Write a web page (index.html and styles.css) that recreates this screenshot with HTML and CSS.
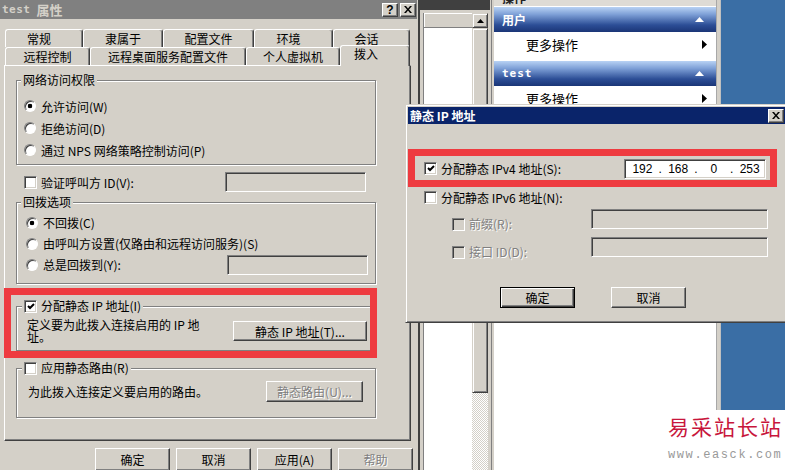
FILE: index.html
```html
<!DOCTYPE html>
<html>
<head>
  <meta charset="UTF-8">
  <title>test 属性</title>
  <link rel="stylesheet" href="styles.css">
</head>
<body>
<div class="screen">

  <!-- 后面的管理控制台窗口 -->
  <div class="mmc">
    <div class="list-pane">
      <div class="list-band"></div>
      <div class="list-box">
        <div class="list-col">
          <div class="list-head"></div>
          <div class="list-white"></div>
        </div>
        <div class="vscroll">
          <div class="sb-btn"><svg width="7" height="4" viewBox="0 0 7 4"><path d="M3.5 0L7 4H0z" fill="#000"/></svg></div>
          <div class="sb-thumb"></div>
          <div class="sb-track"></div>
        </div>
      </div>
    </div>
    <div class="action-pane">
      <div class="act-title"><span>操作</span></div>
      <div class="act-bar"><span>用户</span><svg width="9" height="5" viewBox="0 0 9 5"><path d="M4.5 0L9 5H0z" fill="#fff"/></svg></div>
      <div class="act-item"><span>更多操作</span><svg width="5" height="9" viewBox="0 0 5 9"><path d="M0 0L5 4.5L0 9z" fill="#000"/></svg></div>
      <div class="act-bar"><span class="act-mono">test</span><svg width="9" height="5" viewBox="0 0 9 5"><path d="M4.5 0L9 5H0z" fill="#fff"/></svg></div>
      <div class="act-item"><span>更多操作</span><svg width="5" height="9" viewBox="0 0 5 9"><path d="M0 0L5 4.5L0 9z" fill="#000"/></svg></div>
    </div>
    <div class="mmc-edge"></div>
  </div>

  <!-- test 属性 对话框 -->
  <div class="props">
    <div class="titlebar inactive">
      <span class="title-latin">test</span><span class="title-cjk">属性</span>
      <div class="cap-btns">
        <span class="cap-btn help">?</span>
        <span class="cap-btn"><svg width="8" height="7" viewBox="0 0 8 7"><path d="M0 0h2l2 2.5L6 0h2L5 3.5 8 7H6L4 4.5 2 7H0l3-3.5z" fill="#000"/></svg></span>
      </div>
    </div>

    <div class="tabs">
      <div class="tab-row r1">
        <div class="tab shift">常规</div>
        <div class="tab">隶属于</div>
        <div class="tab">配置文件</div>
        <div class="tab shift">环境</div>
        <div class="tab shift">会话</div>
      </div>
      <div class="tab-row r2">
        <div class="tab">远程控制</div>
        <div class="tab">远程桌面服务配置文件</div>
        <div class="tab">个人虚拟机</div>
        <div class="tab active">拨入</div>
      </div>
    </div>

    <div class="panel">
      <div class="group g1">
        <div class="gtitle">网络访问权限</div>
        <div class="opts">
          <div class="opt"><span class="radio on"></span>允许访问(W)</div>
          <div class="opt"><span class="radio"></span>拒绝访问(D)</div>
          <div class="opt"><span class="radio"></span>通过 NPS 网络策略控制访问(P)</div>
        </div>
      </div>

      <div class="chkrow">
        <span class="chk"></span>验证呼叫方 ID(V):
        <span class="field off cid"></span>
      </div>

      <div class="group g2">
        <div class="gtitle">回拨选项</div>
        <div class="opts">
          <div class="opt"><span class="radio on"></span>不回拨(C)</div>
          <div class="opt"><span class="radio"></span>由呼叫方设置(仅路由和远程访问服务)(S)</div>
          <div class="opt"><span class="radio"></span>总是回拨到(Y):<span class="field off cb"></span></div>
        </div>
      </div>

      <div class="group g3">
        <div class="gtitle ctitle"><span class="chk"><svg width="8" height="7" viewBox="0 0 8 7"><path d="M1 3l2 2 4-4" fill="none" stroke="#000" stroke-width="2"/></svg></span>分配静态 IP 地址(I)</div>
        <div class="gbody">
          <div class="gtext">定义要为此拨入连接启用的 IP 地址。</div>
          <span class="btn ipbtn">静态 IP 地址(T)...</span>
        </div>
      </div>

      <div class="group g4">
        <div class="gtitle ctitle"><span class="chk"></span>应用静态路由(R)</div>
        <div class="gbody">
          <div>为此拨入连接定义要启用的路由。</div>
          <span class="btn dis routebtn">静态路由(U)...</span>
        </div>
      </div>
    </div>

    <div class="dlg-btns">
      <span class="btn">确定</span>
      <span class="btn">取消</span>
      <span class="btn">应用(A)</span>
      <span class="btn dis">帮助</span>
    </div>
  </div>

  <!-- 静态 IP 地址 对话框 -->
  <div class="ipdlg">
    <div class="titlebar active">
      <span>静态 IP 地址</span>
      <div class="cap-btns">
        <span class="cap-btn"><svg width="8" height="7" viewBox="0 0 8 7"><path d="M0 0h2l2 2.5L6 0h2L5 3.5 8 7H6L4 4.5 2 7H0l3-3.5z" fill="#000"/></svg></span>
      </div>
    </div>
    <div class="ip-body">
      <div class="iprow v4">
        <div class="iplabel"><span class="chk"><svg width="8" height="7" viewBox="0 0 8 7"><path d="M1 3l2 2 4-4" fill="none" stroke="#000" stroke-width="2"/></svg></span>分配静态 IPv4 地址(S):</div>
        <div class="field ipfield">
          <span class="seg">192</span><span class="dot">.</span>
          <span class="seg">168</span><span class="dot">.</span>
          <span class="seg">0</span><span class="dot">.</span>
          <span class="seg">253</span>
        </div>
      </div>
      <div class="iprow v6">
        <div class="iplabel"><span class="chk"></span>分配静态 IPv6 地址(N):</div>
      </div>
      <div class="iprow sub first">
        <div class="iplabel dis"><span class="chk off"></span>前缀(R):</div>
        <span class="field off subfield"></span>
      </div>
      <div class="iprow sub">
        <div class="iplabel dis"><span class="chk off"></span>接口 ID(D):</div>
        <span class="field off subfield"></span>
      </div>
      <div class="ip-btns">
        <span class="btn def">确定</span>
        <span class="btn">取消</span>
      </div>
    </div>
  </div>

  <!-- 红色标注 -->
  <div class="mark mark-props"></div>
  <div class="mark mark-ip"></div>

  <div class="watermark">
    <div class="wm-cn">易采站长站</div>
    <div class="wm-url">www.easck.com</div>
  </div>
</div>
</body>
</html>
```

FILE: styles.css
```css
* {
  box-sizing: border-box;
}
body {
  margin: 0;
  width: 785px;
  height: 470px;
  overflow: hidden;
  font-family: "Noto Sans CJK SC", "Liberation Sans", sans-serif;
  font-size: 12px;
  color: #000;
  background: #3a6ea5;
}
.screen {
  position: relative;
  width: 785px;
  height: 470px;
  overflow: hidden;
}

/* 经典控件 */
.chk {
  width: 13px;
  height: 13px;
  flex: none;
  border: 1px solid;
  border-color: #808080 #fff #fff #808080;
  box-shadow: inset 1px 1px #404040, inset -1px -1px #d4d0c8;
  background: #fff;
  display: flex;
  align-items: center;
  justify-content: center;
}
.chk.off {
  background: #d4d0c8;
}
.radio {
  width: 12px;
  height: 12px;
  flex: none;
  border-radius: 50%;
  border: 1px solid;
  border-color: #808080 #fff #fff #808080;
  box-shadow: inset 1px 1px #404040;
  background: #fff;
}
.radio.on {
  background: radial-gradient(circle, #000 0 2px, #fff 2.6px);
}
.field {
  display: block;
  height: 20px;
  border: 1px solid;
  border-color: #808080 #fff #fff #808080;
  box-shadow: inset 1px 1px #404040, inset -1px -1px #d4d0c8;
  background: #fff;
}
.field.off {
  background: #d4d0c8;
}
.btn {
  width: 75px;
  height: 23px;
  flex: none;
  display: flex;
  align-items: center;
  justify-content: center;
  background: #d4d0c8;
  border: 1px solid;
  border-color: #fff #404040 #404040 #fff;
  box-shadow: inset -1px -1px #808080;
  white-space: nowrap;
}
.btn.def {
  border-color: #000;
  box-shadow: inset 1px 1px #fff, inset -1px -1px #404040, inset -2px -2px #808080;
}
.btn.dis {
  color: #808080;
  text-shadow: 1px 1px #fff;
}

/* 标题栏 */
.titlebar {
  display: flex;
  align-items: center;
  font-weight: bold;
  flex: none;
}
.titlebar.inactive {
  height: 19px;
  margin-right: 1px;
  padding-left: 2px;
  background: #808080;
  color: #d4d0c8;
}
.titlebar.active {
  height: 17px;
  padding-left: 2px;
  background: #0a246a;
  color: #fff;
  white-space: pre;
}
.title-latin {
  font-family: "DejaVu Sans Mono", monospace;
  font-size: 11px;
  letter-spacing: 0.5px;
  margin-right: 6px;
}
.title-cjk {
  font-size: 13px;
}
.cap-btns {
  margin-left: auto;
  display: flex;
  gap: 2px;
  margin-right: 1px;
}
.cap-btn {
  width: 16px;
  height: 14px;
  display: flex;
  align-items: center;
  justify-content: center;
  background: #d4d0c8;
  border: 1px solid;
  border-color: #fff #404040 #404040 #fff;
  box-shadow: inset -1px -1px #808080;
  color: #000;
}
.cap-btn.help {
  font-family: "Liberation Sans", sans-serif;
  font-size: 12px;
  font-weight: bold;
  line-height: 12px;
}

/* 后面的控制台 */
.mmc {
  position: absolute;
  left: 420px;
  top: 0;
  width: 301px;
  height: 470px;
  display: flex;
  background: #d4d0c8;
}
.list-pane {
  width: 74px;
  display: flex;
  flex-direction: column;
  background: linear-gradient(to right, #d4d0c8 71px, #808080 71px 72px, #d4d0c8 72px);
}
.list-band {
  height: 10px;
  margin-right: 4px;
  background: #404040;
}
.list-box {
  flex: 1;
  display: flex;
  margin: 3px 6px 0 3px;
}
.list-col {
  flex: 1;
  display: flex;
  flex-direction: column;
  border-left: 1px solid #808080;
}
.list-head {
  height: 15px;
  background: #d4d0c8;
  border-bottom: 1px solid #808080;
  box-shadow: inset 1px 1px #fff;
}
.list-white {
  flex: 1;
  background: #fff;
}
.vscroll {
  width: 16px;
  display: flex;
  flex-direction: column;
}
.sb-btn {
  height: 15px;
  display: flex;
  align-items: center;
  justify-content: center;
  background: #d4d0c8;
  border: 1px solid;
  border-color: #d4d0c8 #404040 #404040 #d4d0c8;
  box-shadow: inset 1px 1px #fff, inset -1px -1px #808080;
}
.sb-thumb {
  height: 365px;
  background: #d4d0c8;
  border: 1px solid;
  border-color: #d4d0c8 #404040 #404040 #d4d0c8;
  box-shadow: inset 1px 1px #fff, inset -1px -1px #808080;
}
.sb-track {
  flex: 1;
  background: repeating-conic-gradient(#d4d0c8 0 25%, #fff 0 50%) 0 0 / 2px 2px;
}
.action-pane {
  flex: 1;
  display: flex;
  flex-direction: column;
  background: #fff;
}
.act-title {
  height: 7px;
  overflow: hidden;
  padding-left: 8px;
  background: #dedbd5;
  border-bottom: 1px solid #fff;
  font-weight: bold;
  color: #222;
}
.act-title span {
  display: block;
  line-height: 14px;
  margin-top: -9px;
}
.act-bar {
  height: 25px;
  display: flex;
  align-items: center;
  justify-content: space-between;
  padding: 0 12px 0 8px;
  background: linear-gradient(#b8d2f4, #7d9fd6 30%, #2c4e96 72%, #1b3577);
  color: #fff;
  font-weight: bold;
}
.act-mono {
  font-family: "DejaVu Sans Mono", monospace;
  font-size: 11px;
  letter-spacing: 1px;
}
.act-item {
  height: 29px;
  display: flex;
  align-items: center;
  justify-content: space-between;
  padding: 0 9px 5px 32px;
  font-size: 13px;
}
.mmc-edge {
  width: 5px;
  background: #d4d0c8;
  border-left: 1px solid #a8a8a8;
  border-right: 1px solid #c0c0c0;
}

/* test 属性 */
.props {
  position: absolute;
  left: 0;
  top: 0;
  width: 420px;
  height: 470px;
  display: flex;
  flex-direction: column;
  background: #d4d0c8;
  border-right: 2px solid #404040;
}
.tabs {
  margin: 10px 0 0 5px;
  width: 405px;
}
.tab-row {
  display: grid;
  height: 18px;
}
.tab-row.r1 {
  grid-template-columns: 78px 80px 91px 79px 77px;
}
.tab-row.r2 {
  grid-template-columns: 85px 156px 94px 70px;
}
.tab {
  height: 18px;
  display: flex;
  align-items: center;
  justify-content: center;
  line-height: 16px;
  background: #d4d0c8;
  border-top: 1px solid #fff;
  border-left: 1px solid #fff;
  border-right: 1px solid #404040;
  box-shadow: inset -1px 0 #808080;
  border-radius: 3px 3px 0 0;
  white-space: nowrap;
}
.tab.shift {
  padding-right: 10px;
}
.tab.active {
  position: relative;
  z-index: 1;
  height: 21px;
  margin-top: -2px;
  align-items: flex-start;
  padding-right: 18px;
}
.panel {
  margin-left: 4px;
  width: 407px;
  height: 376px;
  flex: none;
  padding-left: 11px;
  border: 1px solid;
  border-color: #fff #404040 #404040 #fff;
  box-shadow: inset -1px -1px #808080;
  display: flex;
  flex-direction: column;
}
.group {
  width: 360px;
  border: 1px solid #808080;
  box-shadow: 1px 1px #fff, inset 1px 1px #fff;
}
.gtitle {
  width: max-content;
  height: 16px;
  line-height: 16px;
  margin: -9px 0 0 4px;
  padding: 0 2px;
  background: #d4d0c8;
  display: flex;
  align-items: center;
  gap: 4px;
}
.gtitle.ctitle {
  margin-left: 5px;
}
.g1 {
  margin-top: 14px;
}
.g1 .opts {
  padding: 7px 0 3px 7px;
}
.opt {
  height: 22px;
  display: flex;
  align-items: center;
  gap: 5px;
}
.g2 {
  margin-top: 10px;
}
.g2 .opts {
  padding: 2px 0 8px 9px;
}
.g2 .opt {
  height: 21px;
}
.field.cb {
  width: 141px;
  margin-left: auto;
  margin-right: 7px;
}
.chkrow {
  width: 360px;
  height: 20px;
  margin-top: 7px;
  padding-left: 8px;
  display: flex;
  align-items: center;
  gap: 4px;
}
.field.cid {
  width: 141px;
  margin-left: auto;
  margin-right: 10px;
}
.g3 {
  margin-top: 22px;
}
.gbody {
  display: flex;
  align-items: center;
}
.g3 .gbody {
  padding: 5px 8px 7px 10px;
}
.gtext {
  width: 185px;
  line-height: 12px;
}
.btn.ipbtn {
  width: 134px;
  height: 20px;
  margin-left: auto;
}
.g4 {
  margin-top: 17px;
}
.g4 .gbody {
  padding: 5px 12px 15px 11px;
}
.btn.routebtn {
  width: 97px;
  height: 21px;
  margin-left: auto;
}
.dlg-btns {
  display: flex;
  justify-content: flex-end;
  gap: 6px;
  margin-top: 7px;
  padding-right: 5px;
}

/* 静态 IP 地址 */
.ipdlg {
  position: absolute;
  left: 405px;
  top: 104px;
  width: 384px;
  height: 219px;
  padding: 2px;
  display: flex;
  flex-direction: column;
  background: #d4d0c8;
  border: 1px solid;
  border-color: #d4d0c8 #404040 #404040 #d4d0c8;
  box-shadow: inset 1px 1px #fff, inset -1px -1px #808080;
}
.ipdlg .cap-btns {
  margin-right: 2px;
}
.ip-body {
  padding-left: 16px;
  display: flex;
  flex-direction: column;
}
.iprow {
  display: flex;
  align-items: center;
}
.iprow.v4 {
  margin-top: 34px;
  height: 21px;
}
.iprow.v6 {
  margin-top: 8px;
  height: 21px;
}
.iprow.sub {
  align-items: flex-start;
  padding-left: 28px;
  margin-top: 5px;
}
.iprow.sub.first {
  margin-top: 1px;
}
.iplabel {
  display: flex;
  align-items: center;
  gap: 4px;
  line-height: 16px;
}
.v4 .iplabel {
  width: 200px;
}
.sub .iplabel {
  width: 139px;
  margin-top: 7px;
}
.iplabel.dis {
  color: #808080;
  text-shadow: 1px 1px #fff;
}
.ipfield {
  width: 142px;
  display: flex;
  align-items: center;
  padding-left: 2px;
  font-family: "Liberation Sans", sans-serif;
}
.seg {
  width: 31px;
  text-align: center;
}
.dot {
  width: 5px;
  text-align: center;
}
.subfield {
  width: 177px;
}
.ip-btns {
  display: flex;
  gap: 36px;
  margin: 27px 0 0 76px;
}
.ip-btns .btn {
  height: 21px;
}

/* 红色标注 */
.mark {
  position: absolute;
  border: 7px solid #ee3b40;
}
.mark-props {
  left: 4px;
  top: 288px;
  width: 373px;
  height: 70px;
}
.mark-ip {
  left: 408px;
  top: 149px;
  width: 369px;
  height: 38px;
}

/* 水印 */
.watermark {
  position: absolute;
  left: 650px;
  top: 410px;
  width: 135px;
  height: 60px;
  background: #fff;
  padding-left: 18px;
}
.wm-cn {
  margin-top: 2px;
  font-size: 21px;
  line-height: 28px;
  letter-spacing: 2px;
  color: #c8163c;
  white-space: nowrap;
}
.wm-url {
  margin-top: 8px;
  font-family: "Liberation Mono", monospace;
  font-size: 12px;
  line-height: 14px;
  letter-spacing: 1.6px;
  color: #999;
  white-space: nowrap;
}
```
